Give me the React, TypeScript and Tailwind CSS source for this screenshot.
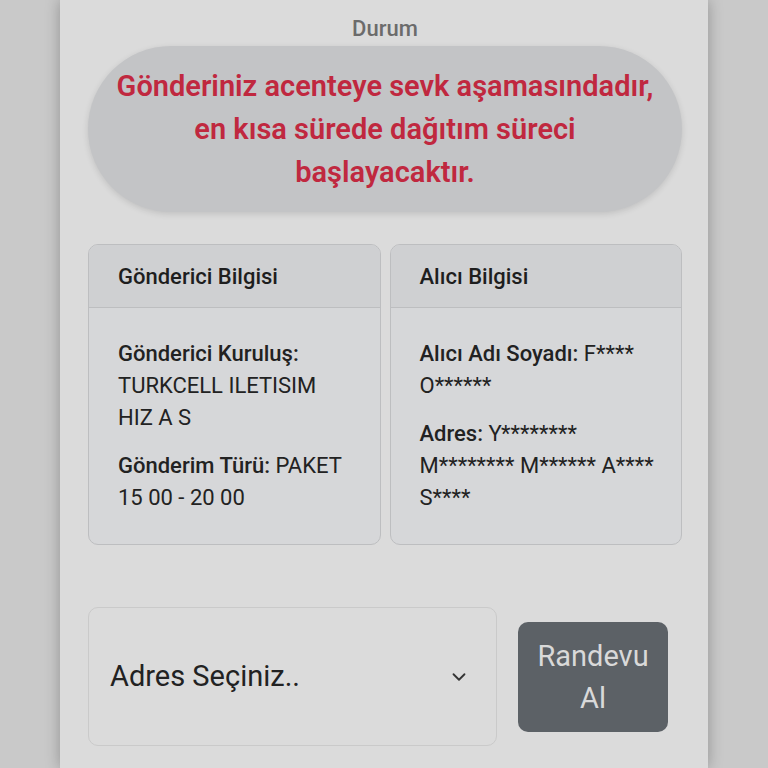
import { ChevronDown } from 'lucide-react';

const CARD = 'flex-1 bg-[#d6d7d9] border border-[#bdbec0] rounded-[10px] overflow-hidden';
const HEAD = 'h-[63px] flex items-center px-[29px] bg-[#cfd0d2] border-b border-[#bdbec0] text-[22px] font-medium text-[#1e1e1e]';
const LINE = 'text-[22px] leading-[32px] text-[#222] whitespace-nowrap';

export default function App() {
  return (
    <div className="min-h-[768px] bg-[#c9c9c9] flex justify-center overflow-hidden" style={{ fontFamily: 'Roboto, "Noto Sans", sans-serif' }}>
      <div className="w-[648px] bg-[#dbdbdb] shadow-[0_0_14px_rgba(0,0,0,0.28)] pl-[28px] pr-[26px] pt-[14px] pb-[20px]">
        <p className="text-center text-[22px] font-medium text-[#6b6b6b] leading-[30px]">Durum</p>

        <div className="mt-[2px] h-[166px] rounded-full bg-[#c3c4c6] shadow-[0_2px_6px_rgba(0,0,0,0.12)] flex items-center justify-center px-[10px]">
          <p className="text-center text-[29px] font-semibold leading-[43px] text-[#c0283f] whitespace-nowrap">
            Gönderiniz acenteye sevk aşamasındadır,<br />
            en kısa sürede dağıtım süreci<br />
            başlayacaktır.
          </p>
        </div>

        <div className="mt-[32px] flex gap-[9px] h-[301px]">
          <div className={CARD}>
            <div className={HEAD}>Gönderici Bilgisi</div>
            <div className="px-[29px] pt-[30px]">
              <p className={LINE}><span className="font-medium">Gönderici Kuruluş:</span><br />TURKCELL ILETISIM<br />HIZ A S</p>
              <p className={`${LINE} mt-[16px]`}><span className="font-medium">Gönderim Türü:</span> PAKET<br />15 00 - 20 00</p>
            </div>
          </div>
          <div className={CARD}>
            <div className={HEAD}>Alıcı Bilgisi</div>
            <div className="px-[29px] pt-[30px]">
              <p className={LINE}><span className="font-medium">Alıcı Adı Soyadı:</span> F****<br />O******</p>
              <p className={`${LINE} mt-[16px]`}><span className="font-medium">Adres:</span> Y********<br />M******** M****** A****<br />S****</p>
            </div>
          </div>
        </div>

        <div className="mt-[62px] flex items-center gap-[21px]">
          <div className="w-[409px] h-[139px] rounded-[10px] border border-[#cacaca] flex items-center justify-between pl-[21px] pr-[26px]">
            <span className="text-[29px] text-[#222]">Adres Seçiniz..</span>
            <ChevronDown size={22} strokeWidth={2} className="text-[#333]" />
          </div>
          <button type="button" className="w-[150px] h-[110px] rounded-[10px] bg-[#5c6166] text-[#d9d9d9] text-[29px] leading-[42px]">
            Randevu<br />Al
          </button>
        </div>
      </div>
    </div>
  );
}
